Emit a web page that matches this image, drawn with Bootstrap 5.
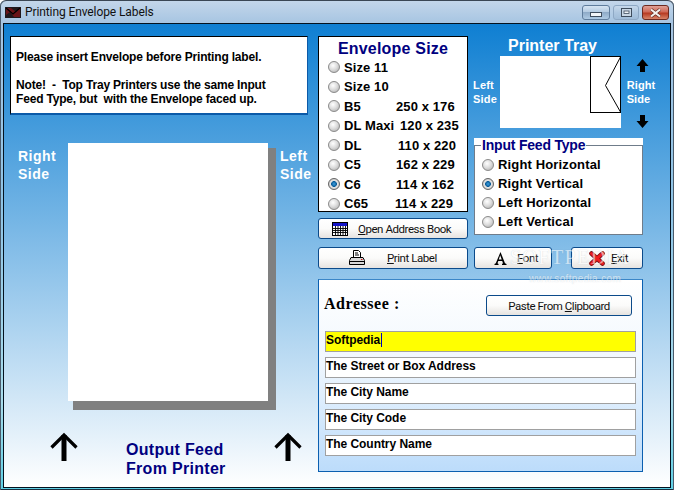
<!DOCTYPE html>
<html lang="en">
<head>
<meta charset="utf-8">
<title>Printing Envelope Labels</title>
<link href="https://cdn.jsdelivr.net/npm/bootstrap@5.3.0/dist/css/bootstrap.min.css" rel="stylesheet">
<style>
html,body{margin:0;padding:0;width:674px;height:490px;overflow:hidden;background:#fff}
body{font-family:"Liberation Sans",Arial,sans-serif;color:#000}
.win{width:674px;height:490px;padding:0 3px 2px 3px;background:linear-gradient(180deg,#c3d6ea 0,#a7c5e2 22px,#8fc4e6 200px,#a8dcec 400px,#5fd0e6 100%);border-top:1px solid #3a4654;border-radius:6px 6px 0 0;box-shadow:inset 1px 0 0 #4a5a6a,inset -1px 0 0 #4a5a6a,inset 0 -1px 0 #1a3040;display:flex;flex-direction:column}
.tbar{height:22px;flex:none;padding-left:2px;padding-top:1px}
.appico{margin-top:5px}
.ttl{font-family:Roboto,"Noto Sans",sans-serif;font-size:12px;color:#111;line-height:20px;margin-left:4px;letter-spacing:-.1px}
.capwrap{margin:4px 2px 0 auto;gap:3px}
.capbtn{width:28px;height:15px;border:1px solid #5f7c9c;border-radius:3px;background:linear-gradient(180deg,#d6e4f2 0,#b4cbe2 45%,#8fabc8 50%,#aecae4 100%);margin-top:-1px}
.capmax{width:26px;background:linear-gradient(180deg,#c6d8ea 0,#aec7e0 50%,#a0bcd8 100%);border-color:#8ea8c4}
.capx{width:27px;border-color:#6d2a20;background:linear-gradient(180deg,#e0a096 0,#cf6a58 45%,#b63a22 55%,#d88468 100%)}
.client{flex:1;border:1px solid #04121f;background:linear-gradient(180deg,#0f7fd2 0,#fff 100%);padding:12px 6px 0 6px;gap:10px;position:relative;min-height:0}
.leftc{width:298px;flex:none}
.note{height:79px;background:#fff;border:1px solid #000;border-bottom:2px solid #0b5aa8;border-right:1px solid #0b5aa8;padding:13px 5px 0 5px;font-size:12px;font-weight:700;line-height:14px;letter-spacing:-.18px;white-space:pre}
.sheetrow{margin-top:28px}
.wlab{color:#fff;font-weight:700;font-size:14px;line-height:18px;letter-spacing:.5px}
.rs{width:58px;flex:none;padding-left:8px;padding-top:4px}
.ls{padding-left:12px;padding-top:4px;flex:none}
.sheet{width:200px;height:258px;background:#fff;box-shadow:5px 5px 0 #808080,8px 9px 0 #808080,8px 5px 0 #808080,5px 9px 0 #808080;flex:none}
.outrow{margin-top:31px;padding-left:40px}
.outlab{color:#000080;font-weight:700;font-size:16px;line-height:19px;letter-spacing:.3px;width:100px;margin:8px 0 0 48px;white-space:nowrap}
.arr2{margin-left:48px}
.rightc{width:325px;flex:none}
.midc{width:150px;flex:none}
.envbox{height:176px;background:#fff;border:1px solid #000;padding:0 0 0 9px}
.envttl{color:#000080;font-size:16px;font-weight:700;text-align:center;line-height:22px;letter-spacing:.2px;padding:1px 9px 0 0;height:20.5px}
.rw{height:19.5px;font-size:13px;font-weight:700;letter-spacing:.1px;white-space:nowrap}
.rw .nm{min-width:52px}
.dm4{margin-left:4px}
.dm2{margin-left:2px}
.dmn{margin-left:-1px}
.form-check-input.rb{width:12px;height:12px;margin:0 4px 0 0;flex:none;border:1px solid #8c8c8c;background-image:radial-gradient(circle at 40% 35%,#fff 0,#dedede 45%,#a8a8a8 100%);background-color:#ddd;box-shadow:none;float:none;opacity:1}
.form-check-input.rb:checked{background-image:radial-gradient(circle at 50% 50%,#3a9fe0 0,#0a5a96 38%,#e8e8e8 44%,#b0b0b0 100%);border-color:#666}
.appbtn{--bs-btn-padding-y:0;--bs-btn-padding-x:0;font-family:Roboto,"Liberation Sans",Arial,sans-serif;font-size:11.5px;color:#111;border:1px solid #0b4a8a;border-radius:3px;background:linear-gradient(180deg,#fff 0,#fbfbfa 50%,#e6e3e0 100%);display:flex;align-items:center;line-height:14px;white-space:nowrap;letter-spacing:-.45px}
.appbtn:hover{color:#111;background:linear-gradient(180deg,#fff 0,#fbfbfa 50%,#e6e3e0 100%);border-color:#0b4a8a}
.b1{width:150px;height:21px;margin-top:6px;padding-left:13px}
.b1 .lb{margin-left:10px}
.b2{width:150px;height:22px;margin-top:8px;padding-left:30px}
.b2 .lb{margin-left:22px}
.b3{width:78px;height:22px;padding-left:19px}
.b3 .lb{margin-left:10px}
.b4{width:72px;height:22px;margin-left:19px;padding-left:17px}
.b4 .lb{margin-left:6px}
.righta{width:169px;flex:none}
.traytop{color:#fff;font-weight:700;font-size:16px;line-height:20px;height:20px;padding-left:34px;white-space:nowrap}
.trayrow{height:72px}
.tl{width:26px;margin-left:-1px;margin-right:1px;font-size:11px;line-height:14px;letter-spacing:.2px;padding-top:22px;flex:none}
.traybox{width:121px;height:72px;background:#fff;flex:none}
.trayside{width:44px;flex:none;margin-left:-2px;margin-right:-40px;font-size:11px;line-height:14px;letter-spacing:.1px;height:72px}
.aup{margin:2px 0 0 3px}
.adn{margin:9px 0 0 3px}
.sidel{margin-top:6px}
.feed{height:97px;margin-top:10px;background:#fff;padding-top:7px}
.feedin{height:90px;border:1px solid #6f7c8a;padding:0 0 0 7px}
.feedlab{display:block;width:fit-content;height:14px;background:#fff;color:#000080;font-size:14px;font-weight:700;line-height:14px;margin:-8px 0 0 -1px;padding:0 1px;letter-spacing:-.2px;white-space:nowrap}
.feedrows{padding-top:3px}
.feedrows .rw{height:19px;letter-spacing:.15px}
.btnrow{margin-top:12px}
.addr{margin-top:10px;height:193px;width:325px;border:1px solid #0b5fb0;border-top-color:#3a86c8;background:linear-gradient(180deg,#fff 0,#f2f8fe 40%,#bcdcfb 100%);padding:0 6px}
.adrtop{height:51px;padding-top:10px}
.adrlab{font-family:"Liberation Serif",serif;font-weight:700;font-size:16px;letter-spacing:.55px;margin:2px 0 0 -1px}
.b5{width:146px;height:21px;margin:5px 4px 0 0;justify-content:center}
.fld{height:21px;border:1px solid #a0a0a0;border-radius:0;padding:1px 0 0 0;font-size:12px;font-weight:700;line-height:14px;background:#fff;color:#000;margin-bottom:5px;letter-spacing:-.05px;white-space:nowrap;min-height:0}
.fld.on{background:#ff0;display:block}
.caretx{border-right:1px solid #0000c0;padding-right:1px}
.wm{position:absolute;pointer-events:none;color:#fff;white-space:nowrap;opacity:.55;text-shadow:0 0 1px rgba(110,130,150,.6)}
.wm1{left:506px;top:221px;font-family:"Liberation Serif",serif;font-size:20px;letter-spacing:1.4px;line-height:24px}
.wm2{left:525px;top:248px;font-family:"Liberation Sans",sans-serif;font-size:10px;letter-spacing:.35px;line-height:14px}
svg{display:block;flex:none}
</style>
</head>
<body>
<div class="win">
  <div class="tbar d-flex align-items-start">
    <svg class="appico" width="16" height="11" viewBox="0 0 16 11" aria-hidden="true"><rect width="16" height="11" fill="#20181c"/><path d="M1 1h5l5 4 4-4v9H9L5 5 1 8z" fill="#6a1418"/><path d="M1 1l7 6 7-6" fill="none" stroke="#000" stroke-width="1.2"/></svg>
    <span class="ttl">Printing Envelope Labels</span>
    <div class="d-flex capwrap">
      <div class="capbtn d-flex align-items-center justify-content-center"><svg width="12" height="6" viewBox="0 0 12 6" class="mt-1"><rect x=".5" y=".5" width="11" height="4" fill="#f2f5f8" stroke="#3e4c5c"/></svg></div>
      <div class="capbtn capmax d-flex align-items-center justify-content-center"><svg width="11" height="9" viewBox="0 0 11 9"><rect x=".5" y=".5" width="10" height="8" fill="#c8d6e4" stroke="#3e4c5c"/><rect x="3" y="3" width="5" height="2.5" fill="#eef2f6" stroke="#3e4c5c" stroke-width=".8"/></svg></div>
      <div class="capbtn capx d-flex align-items-center justify-content-center"><svg width="13" height="10" viewBox="0 0 13 10"><path d="M2 1.5l9 7M11 1.5l-9 7" stroke="#5c2a22" stroke-width="3.4"/><path d="M2 1.5l9 7M11 1.5l-9 7" stroke="#f6f2ee" stroke-width="2.2"/></svg></div>
    </div>
  </div>

  <div class="client d-flex">
    <div class="leftc">
      <div class="note">Please insert Envelope before Printing label.

Note!  -  Top Tray Printers use the same Input
Feed Type, but  with the Envelope faced up.</div>
      <div class="sheetrow d-flex">
        <div class="wlab rs">Right<br>Side</div>
        <div class="sheet"></div>
        <div class="wlab ls">Left<br>Side</div>
      </div>
      <div class="outrow d-flex align-items-start">
        <svg width="28" height="30" viewBox="0 0 28 30" aria-hidden="true"><path d="M14 29V3" stroke="#000" stroke-width="5"/><path d="M1.5 15.5L14 3l12.500 12.500" fill="none" stroke="#000" stroke-width="3.200"/></svg>
        <div class="outlab">Output Feed<br>From Printer</div>
        <svg class="arr2" width="28" height="30" viewBox="0 0 28 30" aria-hidden="true"><path d="M14 29V3" stroke="#000" stroke-width="5"/><path d="M1.5 15.5L14 3l12.500 12.500" fill="none" stroke="#000" stroke-width="3.200"/></svg>
      </div>
    </div>

    <div class="rightc">
      <div class="d-flex" style="gap:6px">
        <div class="midc">
          <div class="envbox">
            <div class="envttl">Envelope Size</div>
            <div class="rw d-flex align-items-center"><input class="form-check-input rb" type="radio" name="es"><span class="nm">Size 11</span></div>
            <div class="rw d-flex align-items-center"><input class="form-check-input rb" type="radio" name="es"><span class="nm">Size 10</span></div>
            <div class="rw d-flex align-items-center"><input class="form-check-input rb" type="radio" name="es"><span class="nm">B5</span><span>250 x 176</span></div>
            <div class="rw d-flex align-items-center"><input class="form-check-input rb" type="radio" name="es"><span class="nm">DL Maxi</span><span class="dm4">120 x 235</span></div>
            <div class="rw d-flex align-items-center"><input class="form-check-input rb" type="radio" name="es"><span class="nm">DL</span><span class="dm2">110 x 220</span></div>
            <div class="rw d-flex align-items-center"><input class="form-check-input rb" type="radio" name="es"><span class="nm">C5</span><span>162 x 229</span></div>
            <div class="rw d-flex align-items-center"><input class="form-check-input rb" type="radio" name="es" checked><span class="nm">C6</span><span>114 x 162</span></div>
            <div class="rw d-flex align-items-center"><input class="form-check-input rb" type="radio" name="es"><span class="nm">C65</span><span class="dmn">114 x 229</span></div>
          </div>
          <button type="button" class="btn appbtn b1">
            <svg width="16" height="14" viewBox="0 0 16 14" aria-hidden="true"><rect x=".5" y=".5" width="15" height="13" fill="#fff" stroke="#000"/><rect x="1" y="1" width="14" height="3" fill="#1414c8"/><path d="M1 6.500h14M1 8.500h14M1 10.500h14M3.500 4v9M6 4v9M8.500 4v9M11 4v9M13.500 4v9" stroke="#000" stroke-width=".9"/></svg>
            <span class="lb"><u>O</u>pen Address Book</span>
          </button>
          <button type="button" class="btn appbtn b2">
            <svg width="16" height="16" viewBox="0 0 16 16" aria-hidden="true"><path d="M4.500 .5h5l2 2v5h-7z" fill="#fff" stroke="#000"/><path d="M6 3h3M6 5h4" stroke="#000"/><path d="M2 7.500h12l1.500 3v4H.5v-4z" fill="#d8d8d8" stroke="#000"/><path d="M1 11.500h14" stroke="#000"/><rect x="12" y="9" width="1.500" height="1" fill="#d01010"/></svg>
            <span class="lb"><u>P</u>rint Label</span>
          </button>
        </div>
        <div class="righta">
          <div class="traytop">Printer Tray</div>
          <div class="trayrow d-flex">
            <div class="wlab tl">Left<br>Side</div>
            <div class="traybox">
              <svg width="121" height="72" viewBox="0 0 121 72" aria-hidden="true"><rect x="90.500" y=".5" width="30" height="56" fill="#fff" stroke="#000"/><path d="M120.500 1L105.500 29.500 120.500 56" fill="none" stroke="#000"/></svg>
            </div>
            <div class="wlab trayside d-flex flex-column align-items-center">
              <svg class="aup" width="13" height="14" viewBox="0 0 13 14" aria-hidden="true"><path d="M6.500 1L12.500 8H9v6H4V8H.5z" fill="#000"/></svg>
              <div class="sidel">Right<br>Side</div>
              <svg class="adn" width="13" height="14" viewBox="0 0 13 14" aria-hidden="true"><path d="M6.500 13L12.500 6H9V0H4v6H.5z" fill="#000"/></svg>
            </div>
          </div>
          <div class="feed">
            <div class="feedin">
              <span class="feedlab">Input Feed Type</span>
              <div class="feedrows">
                <div class="rw d-flex align-items-center"><input class="form-check-input rb" type="radio" name="ft"><span>Right Horizontal</span></div>
                <div class="rw d-flex align-items-center"><input class="form-check-input rb" type="radio" name="ft" checked><span>Right Vertical</span></div>
                <div class="rw d-flex align-items-center"><input class="form-check-input rb" type="radio" name="ft"><span>Left Horizontal</span></div>
                <div class="rw d-flex align-items-center"><input class="form-check-input rb" type="radio" name="ft"><span>Left Vertical</span></div>
              </div>
            </div>
          </div>
          <div class="btnrow d-flex">
            <button type="button" class="btn appbtn b3">
              <svg width="13" height="13" viewBox="0 0 13 13" aria-hidden="true"><path d="M6.500 0L11 11.200l1.500.8v1H8v-1l1-.8L8.200 9H4.300l-.8 2.200 1 .8v1H.5v-1l1.300-.8zM6.200 3.200L4.800 7.500h2.900z" fill="#000" fill-rule="evenodd"/></svg>
              <span class="lb"><u>F</u>ont</span>
            </button>
            <button type="button" class="btn appbtn b4">
              <svg width="16" height="15" viewBox="0 0 16 15" aria-hidden="true"><path d="M2.500 2.500l11 10M13.500 2.500l-11 10" stroke="#7c0c10" stroke-width="4.600" stroke-linecap="round"/><path d="M2.500 2.500l11 10M13.500 2.500l-11 10" stroke="#ee1c20" stroke-width="3" stroke-linecap="round"/></svg>
              <span class="lb"><u>E</u>xit</span>
            </button>
          </div>
        </div>
      </div>
      <div class="addr">
        <div class="adrtop d-flex justify-content-between align-items-start">
          <div class="adrlab">Adressee :</div>
          <button type="button" class="btn appbtn b5"><span>Paste From <u>C</u>lipboard</span></button>
        </div>
        <div class="form-control fld on"><span class="caretx">Softpedia</span></div>
        <div class="form-control fld">The Street or Box Address</div>
        <div class="form-control fld">The City Name</div>
        <div class="form-control fld">The City Code</div>
        <div class="form-control fld">The Country Name</div>
      </div>
    </div>
    <div class="wm wm1">SOFTPEDIA</div>
    <div class="wm wm2">www.softpedia.com</div>
  </div>
</div>
<script src="https://cdn.jsdelivr.net/npm/bootstrap@5.3.0/dist/js/bootstrap.bundle.min.js"></script>
</body>
</html>
